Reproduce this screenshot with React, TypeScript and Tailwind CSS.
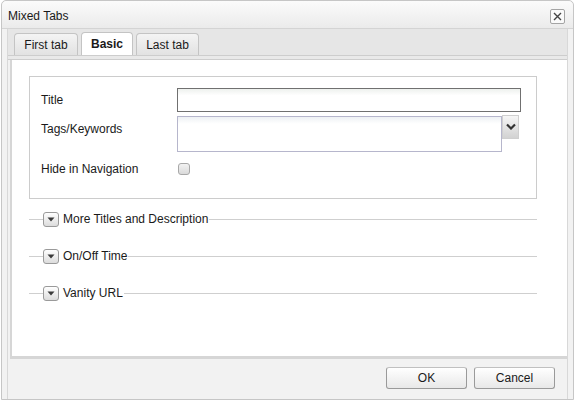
import React from "react"

const tabs = [
  { label: "First tab", width: "w-[64px]", active: false },
  { label: "Basic", width: "w-[52px]", active: true },
  { label: "Last tab", width: "w-[63px]", active: false },
]

const sections = ["More Titles and Description", "On/Off Time", "Vanity URL"]

function Chevron() {
  return (
    <svg width="10" height="7" viewBox="0 0 10 7">
      <path d="M1 1.5 L5 5.5 L9 1.5" fill="none" stroke="#333" strokeWidth="2.2" />
    </svg>
  )
}

function Section({ label }: { label: string }) {
  return (
    <div className="flex items-center h-[16px]">
      <div className="w-[14px] h-px bg-[#cfcfcf]" />
      <button className="w-[16px] h-[15px] rounded-[3px] border border-[#9a9a9a] bg-gradient-to-b from-white to-[#dcdcdc] flex items-center justify-center">
        <svg width="8" height="5" viewBox="0 0 8 5">
          <path d="M0.5 0.5 L7.5 0.5 L4 4.5 Z" fill="#3a3a3a" />
        </svg>
      </button>
      <span className="ml-[4px] mr-[1px] leading-none">{label}</span>
      <div className="flex-1 h-px bg-[#cfcfcf]" />
    </div>
  )
}

export default function App() {
  return (
    <div className="w-[577px] h-[401px] bg-white text-[12px] text-[#1a1a1a] font-['Liberation_Sans',Arial,sans-serif]">
      <div className="ml-[1px] w-[573px] h-[400px] border border-[#c6c6c6] rounded-t-[5px] bg-[#f2f2f2] flex flex-col">
        {/* title bar */}
        <div className="h-[28px] pt-[3px] pl-[6px] pr-[8px] flex items-center justify-between border-b border-[#d4d4d4] rounded-t-[5px] bg-gradient-to-b from-[#fbfbfb] to-[#ebebeb]">
          <span>Mixed Tabs</span>
          <button className="w-[15px] h-[15px] rounded-[2px] border border-[#a4a4a4] bg-[#fafafa] flex items-center justify-center">
            <svg width="9" height="9" viewBox="0 0 9 9">
              <path d="M1 1 L8 8 M8 1 L1 8" stroke="#444" strokeWidth="1.4" />
            </svg>
          </button>
        </div>

        {/* body */}
        <div className="flex-1 mx-[5px] border-x border-[#d8d8d8] flex flex-col">
          {/* tab strip */}
          <div className="h-[26px] bg-[#e6e6e6] pl-[6px] flex items-end gap-[3px]">
            {tabs.map((t) => (
              <div
                key={t.label}
                className={
                  t.active
                    ? `${t.width} h-[23px] rounded-t-[4px] border border-b-0 border-[#c4c4c4] bg-white font-bold flex items-center justify-center`
                    : `${t.width} h-[22px] rounded-t-[4px] border border-b-0 border-[#c4c4c4] bg-gradient-to-b from-[#f4f4f4] to-[#e2e2e2] flex items-center justify-center`
                }
              >
                {t.label}
              </div>
            ))}
          </div>
          <div className="h-[5px] border-y border-[#cdcdcd] bg-[#e9e9e9]" />

          {/* content */}
          <div className="h-[299px] ml-[2px] border-l-2 border-b-[3px] border-[#d6d6d6] bg-white pt-[16px] pl-[17px] pr-[30px] flex flex-col">
            <div className="h-[123px] border border-[#cccccc] pt-[11px] pl-[11px] flex flex-col">
              <div className="flex items-center h-[24px]">
                <span className="w-[136px]">Title</span>
                <div className="w-[344px] h-[24px] border border-[#707070] bg-gradient-to-b from-[#eef1ee] to-white to-[30%]" />
              </div>
              <div className="flex mt-[4px]">
                <span className="w-[136px] pt-[4px]">Tags/Keywords</span>
                <div className="w-[325px] h-[36px] border border-[#b6b6cc] bg-gradient-to-b from-[#eef1f4] to-white to-[20%]" />
                <div className="-mt-[1px] w-[17px] h-[24px] border border-[#cfcfcf] bg-gradient-to-b from-[#f6f6f6] to-[#d2d2d2] flex items-start justify-center pt-[7px]">
                  <Chevron />
                </div>
              </div>
              <div className="flex items-center mt-[9px] h-[16px]">
                <span className="w-[137px]">Hide in Navigation</span>
                <div className="w-[12px] h-[12px] rounded-[3px] border border-[#a8a8a8] bg-gradient-to-b from-[#f2f2f2] to-[#dadada]" />
              </div>
            </div>

            <div className="mt-[12px] flex flex-col gap-[21px]">
              {sections.map((s) => (
                <Section key={s} label={s} />
              ))}
            </div>
          </div>

          {/* footer */}
          <div className="flex-1 flex items-center justify-end gap-[7px] pr-[12px] pb-[2px]">
            <button className="w-[81px] h-[22px] rounded-[3px] border border-[#9a9a9a] border-t-[#c0c0c0] bg-gradient-to-b from-white to-[#e8e8e8]">
              OK
            </button>
            <button className="w-[81px] h-[22px] rounded-[3px] border border-[#9a9a9a] border-t-[#c0c0c0] bg-gradient-to-b from-white to-[#e8e8e8]">
              Cancel
            </button>
          </div>
        </div>
      </div>
    </div>
  )
}
